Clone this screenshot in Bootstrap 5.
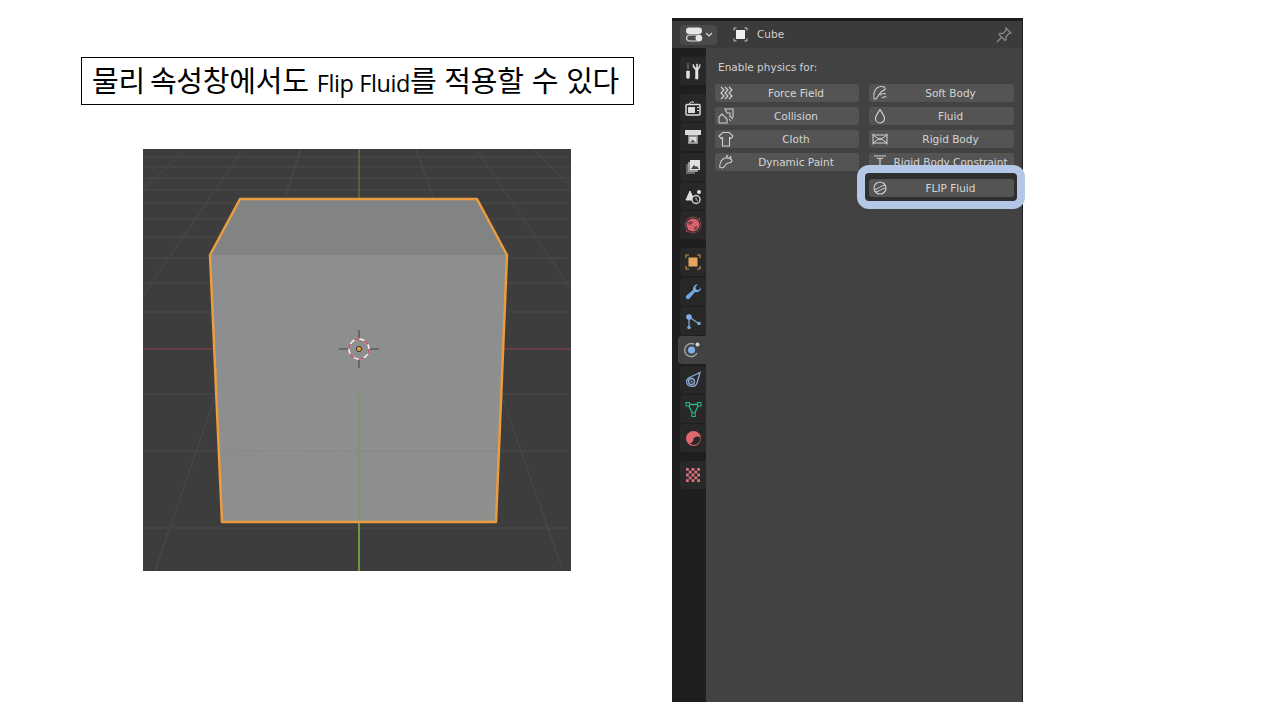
<!DOCTYPE html>
<html lang="ko">
<head>
  <meta charset="UTF-8" />
  <meta name="viewport" content="width=device-width, initial-scale=1" />
  <title>Flip Fluid</title>
  <link href="https://cdn.jsdelivr.net/npm/bootstrap@5.3.0/dist/css/bootstrap.min.css" rel="stylesheet" />
  <style>
    html, body { height: 720px; overflow: hidden; background: #fff; }
    .slide { width: 1280px; height: 720px; padding-top: 18px; }
    .left-side { width: 672px; padding-left: 81px; padding-top: 39px; }
    .title-box { width: 553px; height: 48px; border: 1px solid #000; padding-left: 10px; color: #000;
      font-family: "Noto Sans CJK KR", sans-serif; font-size: 29px; line-height: 42px; white-space: nowrap; letter-spacing: -.2px; }
    .title-box .first-word { margin-right: -3px; }
    .title-box .latin { font-family: "Open Sans", sans-serif; font-size: 23.5px; letter-spacing: -.4px; }
    .viewport { display: block; width: 428px; height: 422px; margin: 44px 0 0 62px; }

    .props { position: relative; width: 351px; height: 684px; background: #424242; color: #d0d0d0;
      border-right: 1px solid #222; border-top: 3px solid #1d1d1d; font-family: "DejaVu Sans", sans-serif; font-size: 10.5px; }
    .props-head { height: 27px; background: #3b3b3b; padding-left: 8px; }
    .editor-btn { width: 37px; height: 20px; background: #4a4a4a; border-radius: 4px; padding-left: 6px; }
    .cube-label { margin-left: 9px; padding-top: 1px; color: #d0d0d0; }
    .pin-icon { margin-right: 9px; }
    .tabs { width: 34px; background: #1f1f1f; padding: 9px 0 0 8px; }
    .tab { width: 26px; height: 28px; margin-bottom: 1.35px; background: #282828; border-radius: 4px 0 0 4px; }
    .tab.on { width: 28px; margin-left: -2px; background: #424242; }
    .tab.first { margin-top: 9px; }
    .props-body { padding: 10px 8px 0 9px; }
    .enable { padding-left: 3px; height: 26px; line-height: 18px; }
    .phys-btn { position: relative; height: 18px; margin-bottom: 5px; background: #545454; border-radius: 3px;
      line-height: 19px; text-align: center; padding-left: 18px; white-space: nowrap; overflow: hidden; color: #d4d4d4; }
    .phys-btn svg { position: absolute; left: 3px; top: 1px; }
    .col-l { width: 144px; }
    .col-r { width: 145px; margin-left: 10px; }
    .flip-box { position: absolute; left: 185px; top: 144px; width: 168px; height: 44px; background: #2f2f2f;
      border: 8px solid #b4c7e7; border-radius: 12px; padding: 6px 3px 0 4px; }
    .flip-box .phys-btn { margin: 0; }
  </style>
</head>
<body>
  <div class="slide d-flex">
    <div class="left-side">
      <div class="title-box"><span class="first-word">물리</span> 속성창에서도 <span class="latin">Flip Fluid</span>를 적용할 수 있다</div>

      <svg class="viewport" viewBox="0 0 428 422">
        <defs>
          <linearGradient id="front" x1="0" y1="0" x2="1" y2="1">
            <stop offset="0" stop-color="#8c8d8f" />
            <stop offset="1" stop-color="#8e908e" />
          </linearGradient>
        </defs>
        <rect width="428" height="422" fill="#3d3d3d" />
        <g stroke="#4b4b4b" stroke-width="1" fill="none">
          <path d="M0 8H428M0 18H428M0 29H428M0 41H428M0 54H428M0 70H428M0 88H428M0 109H428M0 134H428M0 163H428M0 245H428M0 302H428M0 379H428" />
          <path d="M43 0L0 40M100 0L0 147M158 0L142 48M273 0L290 48M333 0L428 140M390 0L428 37M73 245L12 422M359 248L420 422" />
        </g>
        <path d="M0 200H428" stroke="#7a3f48" stroke-width="1.5" />
        <path d="M216 0V50" stroke="#5d6e3c" stroke-width="1.5" />
        <path d="M216 373V422" stroke="#6e9a3a" stroke-width="2" />
        <path d="M67 106H364L353 373H79Z" fill="url(#front)" />
        <path d="M97 50H334L364 106H67Z" fill="#818385" />
        <path d="M77 302H355" stroke="#868887" stroke-width="1" />
        <path d="M216 245V373" stroke="#7f9a5a" stroke-width="1.5" />
        <path d="M97 50H334L364 106L353 373H79L67 106Z" fill="none" stroke="#eb9c3f" stroke-width="2.5" stroke-linejoin="round" />
        <g fill="none">
          <path d="M196 200H207M225 200H236M216 181V191M216 209V219" stroke="#5b5d5e" stroke-width="1.5" />
          <circle cx="216" cy="200" r="10" stroke="#f0f0f0" stroke-width="1.5" />
          <circle cx="216" cy="200" r="10" stroke="#c04a58" stroke-width="1.5" stroke-dasharray="5.2 5.3" />
        </g>
        <circle cx="216" cy="200" r="2.6" fill="#f0a040" stroke="#333" stroke-width="1" />
      </svg>
    </div>

    <div class="props">
      <div class="props-head d-flex align-items-center">
        <div class="editor-btn d-flex align-items-center">
          <svg width="28" height="15" viewBox="0 0 28 15">
            <rect x="0" y="0.5" width="16" height="6.5" rx="3.2" fill="#e6e6e6" />
            <rect x="0.6" y="8" width="15" height="6" rx="3" fill="none" stroke="#e6e6e6" stroke-width="1.2" />
            <circle cx="12.5" cy="11" r="3" fill="#e6e6e6" />
            <path d="M20 6l3 3 3-3" fill="none" stroke="#d8d8d8" stroke-width="1.2" />
          </svg>
        </div>
        <svg class="ms-3" width="15" height="15" viewBox="0 0 15 15">
          <rect x="3" y="3" width="9" height="9" fill="#efefef" />
          <path d="M1 3.5V1H3.5M11.5 1H14V3.5M14 11.5V14H11.5M3.5 14H1V11.5" fill="none" stroke="#c8c8c8" stroke-width="1" />
        </svg>
        <span class="cube-label">Cube</span>
        <svg class="ms-auto pin-icon" width="18" height="18" viewBox="0 0 18 18">
          <path d="M11 2l5 5-2 .5-3 3 .2 3-1.2 1-6-6 1-1.2 3 .2 3-3zM6.5 11.5L2 16" fill="none" stroke="#8f8f8f" stroke-width="1.1" />
        </svg>
      </div>

      <div class="d-flex" style="height: 654px">
        <div class="tabs">
          <div class="tab d-flex align-items-center justify-content-center">
            <svg width="16" height="18" viewBox="0 0 16 18"><path d="M3 1v6M1.5 9h3V15a1.5 1.5 0 0 1-3 0zM8 2l2.5 4h1V2l1 0v0l0 0 .5 4h.5L15 2v3l-2 3v9h-2.500V8L8 5z" fill="#e2e2e2" stroke="#e2e2e2" stroke-width=".5"/></svg>
          </div>
          <div class="tab first d-flex align-items-center justify-content-center">
            <svg width="16" height="15" viewBox="0 0 16 15"><rect x="1" y="3.5" width="14" height="10.5" rx="1" fill="none" stroke="#dcdcdc" stroke-width="1.5"/><rect x="3" y="6" width="7" height="6" fill="#dcdcdc"/><path d="M4 3l2-2h3" stroke="#dcdcdc" fill="none"/><path d="M12 6.5h2M12 9.5h2" stroke="#dcdcdc"/></svg>
          </div>
          <div class="tab d-flex align-items-center justify-content-center">
            <svg width="16" height="16" viewBox="0 0 16 16"><rect x="0" y="1" width="16" height="5" fill="#dcdcdc"/><rect x="3" y="6" width="10" height="9" fill="#8a8a8a"/><rect x="4.5" y="8" width="7" height="6" fill="#dedede"/><path d="M5 13.5l2.5-3 3.5 3z" fill="#555"/></svg>
          </div>
          <div class="tab d-flex align-items-center justify-content-center">
            <svg width="16" height="16" viewBox="0 0 16 16"><rect x="1" y="5" width="9" height="10" fill="#666"/><rect x="3" y="3" width="10" height="10" fill="#999"/><rect x="5" y="1" width="10" height="10" fill="#e0e0e0"/><path d="M6 10l3-4 2 2 1-1 2 3z" fill="#444"/></svg>
          </div>
          <div class="tab d-flex align-items-center justify-content-center">
            <svg width="17" height="17" viewBox="0 0 17 17"><path d="M5 3L9 12H1z" fill="#e0e0e0" stroke="#e0e0e0" stroke-linejoin="round"/><circle cx="14" cy="4" r="2" fill="#e0e0e0"/><circle cx="11" cy="11.5" r="4" fill="#2a2a2a" stroke="#d0d0d0" stroke-width="1.5"/><path d="M11 9.5v2l1.5 1" stroke="#d0d0d0" fill="none"/></svg>
          </div>
          <div class="tab d-flex align-items-center justify-content-center">
            <svg width="18" height="18" viewBox="0 0 18 18"><circle cx="9" cy="9" r="6.5" fill="#d9606e"/><path d="M3.5 7l3-2 2.500 1-1 2-3 1zM10 11l3.500-1-1 3.500-2 .5z" fill="#7a3f48"/><path d="M2 16L16 2" stroke="#d9606e" stroke-width="1"/><circle cx="9" cy="9" r="8" fill="none" stroke="#9a4a55" stroke-width=".8"/></svg>
          </div>
          <div class="tab first d-flex align-items-center justify-content-center">
            <svg width="16" height="16" viewBox="0 0 16 16"><rect x="3.5" y="3.5" width="9" height="9" fill="#e8a45c"/><path d="M1 4V1H4M12 1H15V4M15 12V15H12M4 15H1V12" fill="none" stroke="#c98a45" stroke-width="1.2"/></svg>
          </div>
          <div class="tab d-flex align-items-center justify-content-center">
            <svg width="17" height="17" viewBox="0 0 17 17"><path d="M16 4.500a4.500 4.500 0 0 1-6 4.500L4.500 15.500a2 2 0 0 1-3-3L8 7a4.500 4.500 0 0 1 5-5.500L10.500 4l.5 2.500 2.500.5z" fill="#71a8e4"/></svg>
          </div>
          <div class="tab d-flex align-items-center justify-content-center">
            <svg width="17" height="17" viewBox="0 0 17 17"><path d="M4 4L13 10M4 4V14" stroke="#7fa6d6" stroke-width="1.3"/><circle cx="4" cy="4" r="2.8" fill="#7fb0ea"/><circle cx="14" cy="10.5" r="1.8" fill="#7fa6d6"/><circle cx="4" cy="14.5" r="1.8" fill="#7fa6d6"/></svg>
          </div>
          <div class="tab on d-flex align-items-center justify-content-center">
            <svg width="18" height="18" viewBox="0 0 18 18"><path d="M11 3.2A6.5 6.5 0 1 0 14 12" fill="none" stroke="#a3a8ae" stroke-width="1.4"/><circle cx="8.5" cy="9" r="3.5" fill="#7fb0ea"/><circle cx="14.5" cy="3.5" r="2" fill="#cfd6de"/></svg>
          </div>
          <div class="tab d-flex align-items-center justify-content-center">
            <svg width="17" height="17" viewBox="0 0 17 17"><path d="M1.5 11a5 5 0 0 1 2-4L15 1.500 12 12a5.500 5.500 0 0 1-10.500-1z" fill="none" stroke="#8cabd6" stroke-width="1.3"/><circle cx="6.5" cy="10.5" r="3" fill="none" stroke="#8cabd6" stroke-width="1.3"/><circle cx="6.5" cy="10.5" r="1" fill="#8cabd6"/></svg>
          </div>
          <div class="tab d-flex align-items-center justify-content-center">
            <svg width="17" height="17" viewBox="0 0 17 17"><path d="M3 3.5H14L8.5 14z" fill="none" stroke="#1fbd87" stroke-width="1.3"/><rect x="1" y="1.5" width="3.5" height="3.5" fill="#2a2a2a" stroke="#1fbd87"/><rect x="12.5" y="1.5" width="3.5" height="3.5" fill="#2a2a2a" stroke="#1fbd87"/><rect x="6.8" y="12" width="3.5" height="3.5" fill="#2a2a2a" stroke="#1fbd87"/></svg>
          </div>
          <div class="tab d-flex align-items-center justify-content-center">
            <svg width="17" height="17" viewBox="0 0 17 17"><circle cx="8.5" cy="8.5" r="7.5" fill="#e0686f"/><path d="M8.5 8.5C11 6 13 6 15.5 7.5 16 11 13 15 9 15 7 15 5.5 14 5 13 7 13 8.5 11 8.5 8.5z" fill="#2a2a2a"/></svg>
          </div>
          <div class="tab first d-flex align-items-center justify-content-center">
            <svg width="16" height="16" viewBox="0 0 16 16"><rect x="1" y="1" width="14" height="14" fill="#d9707a"/><path d="M3.800 1h2.800v2.800H3.800zM9.400 1h2.800v2.800H9.400zM1 3.800h2.800v2.800H1zM6.600 3.800h2.800v2.800H6.600zM12.200 3.800H15v2.800h-2.800zM3.800 6.600h2.800v2.800H3.800zM9.400 6.600h2.800v2.800H9.400zM1 9.400h2.800v2.800H1zM6.600 9.400h2.800v2.800H6.600zM12.200 9.400H15v2.800h-2.800zM3.800 12.200h2.800V15H3.800zM9.400 12.200h2.800V15H9.400z" fill="#2a2a2a"/></svg>
          </div>
        </div>

        <div class="props-body flex-grow-1">
          <div class="enable">Enable physics for:</div>
          <div class="d-flex">
            <div class="col-l">
              <div class="phys-btn">
                <svg width="16" height="16" viewBox="0 0 16 16"><path d="M3 2l3 3-3 3 3 3-3 3M7 2l3 3-3 3 3 3-3 3M11 2l3 3-3 3 3 3-3 3" fill="none" stroke="#cfcfcf" stroke-width="1.2"/></svg>
                Force Field
              </div>
              <div class="phys-btn">
                <svg width="16" height="16" viewBox="0 0 16 16"><path d="M7 1h8v8h-3V5H9zM1 9l3-3 5 5v4H1z" fill="none" stroke="#cfcfcf" stroke-width="1.1"/><path d="M11 11l2 2M13 10l2 1" stroke="#cfcfcf"/></svg>
                Collision
              </div>
              <div class="phys-btn">
                <svg width="16" height="16" viewBox="0 0 16 16"><path d="M5 1.5H11L15 5l-2 2.500-1.500-1V15H4.500V6.500L3 7.500 1 5z" fill="none" stroke="#cfcfcf" stroke-width="1.1"/></svg>
                Cloth
              </div>
              <div class="phys-btn">
                <svg width="16" height="16" viewBox="0 0 16 16"><path d="M1.5 13C2 9 3 5 7 4c3-.5 7 .5 7 3 0 2-3 1.500-5 2.500-2 1-2 4-5 4.500z" fill="none" stroke="#cfcfcf" stroke-width="1.1"/><circle cx="9" cy="2" r="1" fill="#cfcfcf"/><circle cx="12.5" cy="3" r="1" fill="#cfcfcf"/></svg>
                Dynamic Paint
              </div>
            </div>
            <div class="col-r">
              <div class="phys-btn">
                <svg width="16" height="16" viewBox="0 0 16 16"><path d="M2 14C1 8 3 2 9 1.500c3-.3 5 1.500 4 3L9 7l-5 7zM8 10c2-1.500 4-2 6-1M10 13c1.500-1 3-1.500 4.500-1" fill="none" stroke="#cfcfcf" stroke-width="1.1"/></svg>
                Soft Body
              </div>
              <div class="phys-btn">
                <svg width="16" height="16" viewBox="0 0 16 16"><path d="M8 1.5C6 5 3.500 7.500 3.500 10.500a4.500 4.500 0 0 0 9 0C12.500 7.500 10 5 8 1.500z" fill="none" stroke="#d8d8d8" stroke-width="1.1"/></svg>
                Fluid
              </div>
              <div class="phys-btn">
                <svg width="16" height="16" viewBox="0 0 16 16"><path d="M1 2.5V13.5M15 2.5V13.5M1 4H15M1 12H15M1 4L8 9 15 4M1 12L8 7 15 12" fill="none" stroke="#cfcfcf" stroke-width="1"/></svg>
                Rigid Body
              </div>
              <div class="phys-btn">
                <svg width="16" height="16" viewBox="0 0 16 16"><path d="M2 2H14M5 4.5H11M8 4.5V12M4 14H12M6 12H10" fill="none" stroke="#cfcfcf" stroke-width="1.2"/></svg>
                Rigid Body Constraint
              </div>
            </div>
          </div>
        </div>
      </div>

      <div class="flip-box">
        <div class="phys-btn">
          <svg width="16" height="16" viewBox="0 0 16 16"><circle cx="8" cy="8" r="6" fill="none" stroke="#cfcfcf" stroke-width="1.1"/><path d="M2.5 9.500C6 9.500 9 5 13 5.500M3.500 12C7 12 10 8 14 8" fill="none" stroke="#cfcfcf" stroke-width="1"/></svg>
          FLIP Fluid
        </div>
      </div>
    </div>
  </div>

  <script src="https://cdn.jsdelivr.net/npm/bootstrap@5.3.0/dist/js/bootstrap.bundle.min.js"></script>
</body>
</html>
